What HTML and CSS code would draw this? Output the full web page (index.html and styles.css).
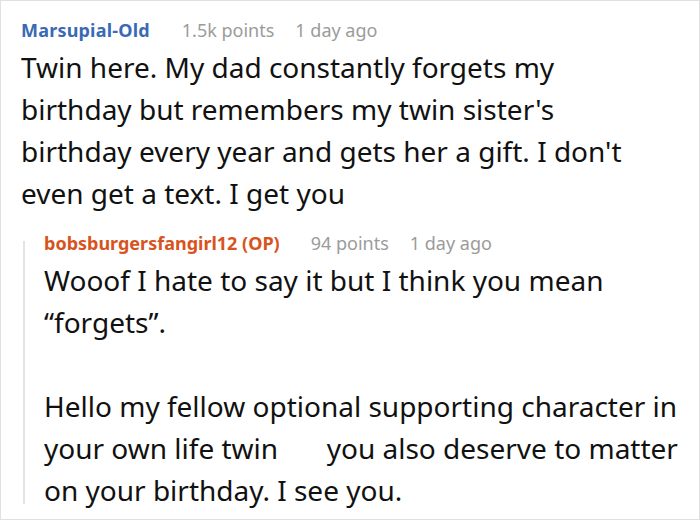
FILE: index.html
```html
<!DOCTYPE html>
<html>
<head>
<meta charset="utf-8">
<link rel="stylesheet" href="styles.css">
</head>
<body>
<div class="frame">
  <div class="comment">
    <div class="meta">
      <span class="author parent">Marsupial-Old</span>
      <span class="info">1.5k points</span>
      <span class="info">1 day ago</span>
    </div>
    <div class="body">Twin here. My dad constantly forgets my<br>birthday but remembers my twin sister's<br>birthday every year and gets her a gift. I don't<br>even get a text. I get you</div>
    <div class="reply">
      <div class="thread-line"></div>
      <div class="reply-content">
        <div class="meta">
          <span class="author op">bobsburgersfangirl12 (OP)</span>
          <span class="info">94 points</span>
          <span class="info">1 day ago</span>
        </div>
        <div class="body">Wooof I hate to say it but I think you mean<br>“forgets”.<br><br>Hello my fellow optional supporting character in<br>your own life twin <span class="emoji"></span> you also deserve to matter<br>on your birthday. I see you.</div>
      </div>
    </div>
  </div>
</div>
</body>
</html>
```
FILE: styles.css
```css
html, body {
  margin: 0;
  padding: 0;
  background: #fff;
}
.frame {
  box-sizing: border-box;
  width: 700px;
  height: 520px;
  border: 1px solid #e0e0e0;
  overflow: hidden;
  font-family: "Noto Sans", sans-serif;
  color: #111;
}
.comment {
  padding: 17px 0 0 20px;
}
.meta {
  display: flex;
  gap: 21px;
  align-items: baseline;
  font-size: 18px;
  line-height: 24px;
  white-space: nowrap;
}
.author {
  font-weight: bold;
  color: #3a6ab4;
  margin-right: 10px;
}
.author.parent {
  letter-spacing: 0.2px;
  margin-right: 11px;
}
.author.op {
  color: #d8531d;
}
.info {
  color: #9b9b9b;
}
.body {
  font-size: 28px;
  line-height: 42px;
  margin-top: 4px;
  white-space: nowrap;
}
.reply {
  display: flex;
  margin-top: 17px;
}
.thread-line {
  width: 2px;
  margin: 10px 0 7px 2px;
  background: #e3e3e3;
}
.reply-content {
  padding-left: 19px;
}
.emoji {
  display: inline-block;
  width: 34px;
}
```
